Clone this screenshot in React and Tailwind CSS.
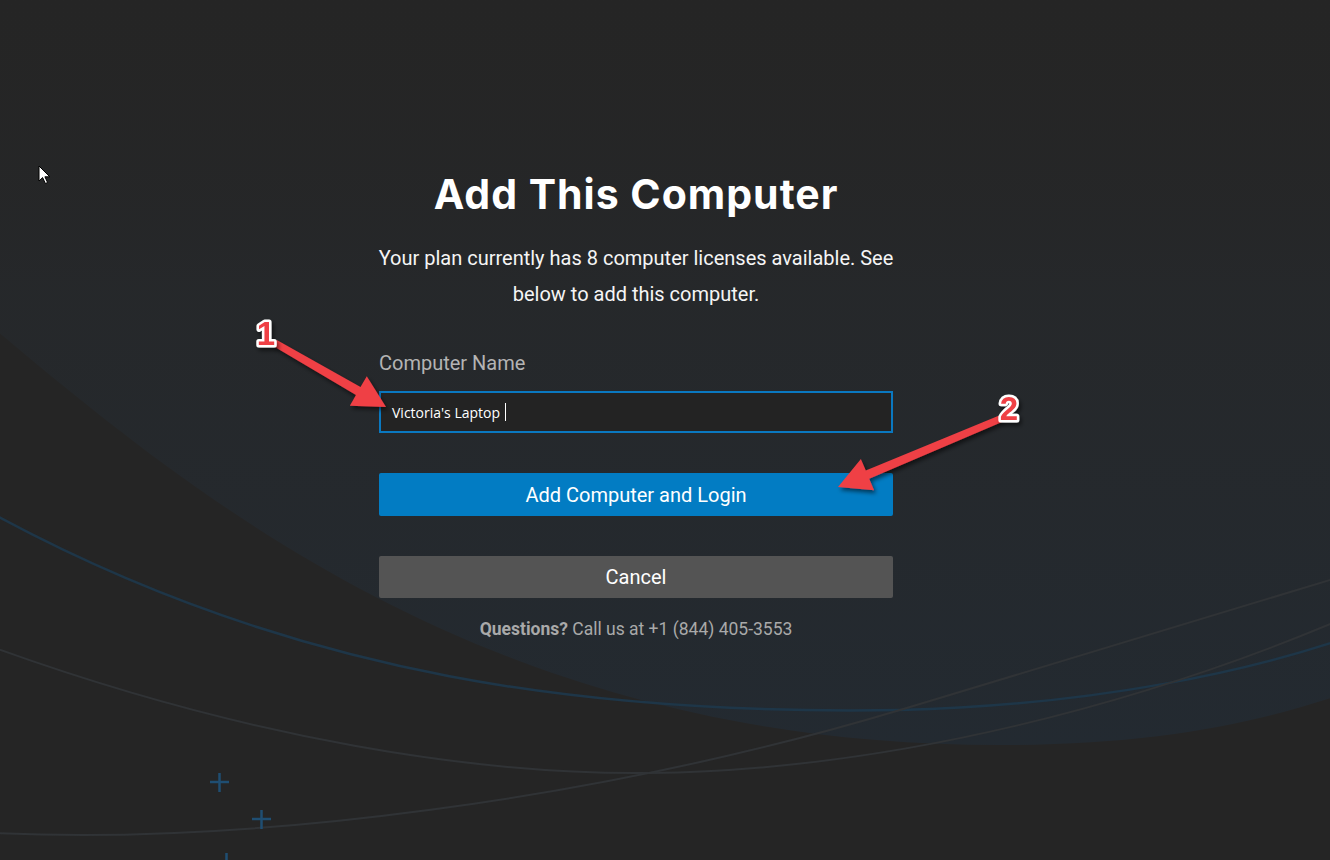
import React from "react";

function arrowPoints(sx, sy, tx, ty, shaft = 9, headLen = 32, headW = 34) {
  const dx = tx - sx;
  const dy = ty - sy;
  const len = Math.hypot(dx, dy);
  const ux = dx / len;
  const uy = dy / len;
  const px = -uy;
  const py = ux;
  const bx = tx - ux * headLen;
  const by = ty - uy * headLen;
  const s0 = shaft * 0.4;
  const pts = [
    [sx + px * s0, sy + py * s0],
    [bx + px * shaft / 2, by + py * shaft / 2],
    [bx + px * headW / 2, by + py * headW / 2],
    [tx, ty],
    [bx - px * headW / 2, by - py * headW / 2],
    [bx - px * shaft / 2, by - py * shaft / 2],
    [sx - px * s0, sy - py * s0],
  ];
  return pts.map((p) => p.map((v) => v.toFixed(1)).join(",")).join(" ");
}

function Background() {
  return (
    <svg className="absolute inset-0" width="1330" height="860" viewBox="0 0 1330 860">
      <defs>
        <linearGradient id="shape" x1="0" y1="0" x2="0" y2="1" gradientUnits="objectBoundingBox">
          <stop offset="0" stopColor="#262626" stopOpacity="0" />
          <stop offset="0.4" stopColor="#262a2e" stopOpacity="0.6" />
          <stop offset="1" stopColor="#232a31" stopOpacity="1" />
        </linearGradient>
      </defs>
      <path
        d="M -10,325 C 210,510 500,745 1000,745 C 1150,745 1250,725 1340,695 L 1340,-10 L -10,-10 Z"
        fill="url(#shape)"
      />
      <path
        d="M -5,515 C 300,680 600,715 900,710 C 1100,705 1250,670 1340,640"
        fill="none"
        stroke="#1e3648"
        strokeWidth="2.5"
      />
      <path
        d="M -5,648 C 250,740 480,775 650,773 C 900,770 1150,700 1340,620"
        fill="none"
        stroke="#303336"
        strokeWidth="2"
      />
      <path
        d="M -5,833 C 250,845 600,800 900,710 C 1100,650 1250,605 1340,577"
        fill="none"
        stroke="#303336"
        strokeWidth="2"
      />
      <g stroke="#1f4e72" strokeWidth="2.5">
        <line x1="210" y1="782" x2="229" y2="782" />
        <line x1="219.5" y1="773" x2="219.5" y2="792" />
        <line x1="252" y1="819" x2="271" y2="819" />
        <line x1="261.5" y1="810" x2="261.5" y2="829" />
        <line x1="226.5" y1="853" x2="226.5" y2="870" />
      </g>
    </svg>
  );
}

function Overlay() {
  return (
    <svg className="absolute inset-0 pointer-events-none" width="1330" height="860" viewBox="0 0 1330 860">
      <defs>
        <filter id="ds" x="-20%" y="-20%" width="140%" height="140%">
          <feDropShadow dx="2" dy="3" stdDeviation="2" floodColor="#000" floodOpacity="0.55" />
        </filter>
      </defs>
      <g transform="translate(39,166)">
        <path d="M0,0 L0,15 L3.6,11.6 L6.4,17.5 L8.6,16.5 L5.9,10.8 L10.8,10.8 Z" fill="#fff" stroke="#000" strokeWidth="1" strokeLinejoin="round" />
      </g>
      <g filter="url(#ds)">
        <polygon points={arrowPoints(275, 343, 386, 407)} fill="#ef3f45" />
        <polygon points={arrowPoints(1000, 419, 838, 487)} fill="#ef3f45" />
      </g>
      <g filter="url(#ds)" fontFamily="'Liberation Sans', Arial, sans-serif" fontWeight="700" fontSize="33" textAnchor="middle">
        <text x="266" y="345" fill="#ef3f45" stroke="#fff" strokeWidth="5" strokeLinejoin="round" paintOrder="stroke">1</text>
        <text x="1009" y="420" fill="#ef3f45" stroke="#fff" strokeWidth="5" strokeLinejoin="round" paintOrder="stroke">2</text>
      </g>
    </svg>
  );
}

export default function App() {
  return (
    <div className="relative w-[1330px] h-[860px] overflow-hidden bg-[#252525]">
      <Background />
      <div className="relative flex justify-center pr-[58px] pt-[170px]">
        <div className="w-[514px] flex flex-col items-stretch font-['Roboto',sans-serif]">
          <h1 className="text-center text-white font-['Inter',sans-serif] font-bold text-[41px] leading-[48px] tracking-[1px] whitespace-nowrap -mx-[20px]">
            Add This Computer
          </h1>
          <p className="mt-[22px] text-center text-[#f5f5f5] text-[20px] leading-[36px] -mx-[4px]">
            Your plan currently has 8 computer licenses available. See below to add this computer.
          </p>
          <label className="mt-[39px] text-[#b4b4b4] text-[20px] leading-[24px]">Computer Name</label>
          <div className="mt-[16px] h-[42px] border-2 border-[#0a78c0] bg-[#232323] flex items-center pl-[11px]">
            <span className="text-white text-[14px] font-['Open_Sans',sans-serif]">Victoria's Laptop</span>
            <span className="ml-[5px] w-px h-[18px] bg-white" />
          </div>
          <button className="mt-[40px] h-[43px] rounded-[2px] bg-[#027cc3] text-white text-[20px]">
            Add Computer and Login
          </button>
          <button className="mt-[40px] h-[42px] rounded-[2px] bg-[#545454] text-white text-[20px]">
            Cancel
          </button>
          <p className="mt-[19px] text-center text-[#a9a9a9] text-[17.5px] leading-[24px]">
            <span className="font-bold">Questions?</span> Call us at +1 (844) 405-3553
          </p>
        </div>
      </div>
      <Overlay />
    </div>
  );
}
